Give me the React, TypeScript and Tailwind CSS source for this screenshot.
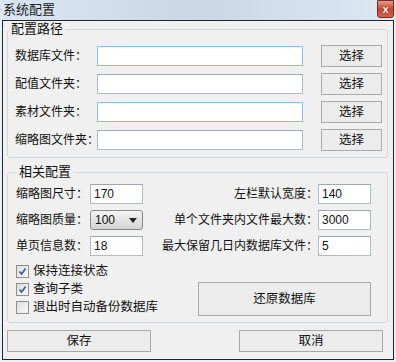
const ui = "font-['Liberation_Sans','Noto_Sans_CJK_SC',sans-serif]";

function TextBox({ value = "", width, blue = false }: { value?: string; width: string; blue?: boolean }) {
  return (
    <div
      className={`${width} h-[20px] shrink-0 border bg-white pl-[3px] text-[12px] leading-[18px] ${
        blue ? "border-[#8fbbe3]" : "border-[#b5b9c2] border-t-[#a2a6ae]"
      }`}
    >
      {value}
    </div>
  );
}

function Button({ label, className }: { label: string; className: string }) {
  return (
    <div
      className={`${className} flex shrink-0 items-center justify-center border border-[#a9a9a9] bg-[#ececec] text-[12.5px]`}
    >
      {label}
    </div>
  );
}

function Check({ checked, label }: { checked: boolean; label: string }) {
  return (
    <div className="flex h-[18px] items-center">
      <span className="flex h-[13px] w-[13px] items-center justify-center border border-[#8f8f8f] bg-gradient-to-br from-[#dcdcdc] to-[#fbfbfb]">
        {checked && (
          <svg width="9" height="9" viewBox="0 0 9 9">
            <path d="M1.5 4.5 L3.6 7 L7.6 1.5" fill="none" stroke="#4a5f97" strokeWidth="1.8" />
          </svg>
        )}
      </span>
      <span className="ml-[4px] whitespace-nowrap text-[12.5px]">{label}</span>
    </div>
  );
}

function Label({ text, className = "" }: { text: string; className?: string }) {
  return <span className={`${className} shrink-0 whitespace-nowrap text-[12px]`}>{text}</span>;
}

function PathRow({ label, blue }: { label: string; blue?: boolean }) {
  return (
    <div className="flex h-[28px] items-center pl-[7px]">
      <Label text={label} className="w-[82px]" />
      <TextBox width="w-[206px]" blue={blue} />
      <Button label="选择" className="ml-[18px] h-[22px] w-[61px]" />
    </div>
  );
}

function Legend({ text }: { text: string }) {
  return <legend className="ml-[1px] px-[2px] text-[13px] leading-[14px]">{text}</legend>;
}

export default function App() {
  return (
    <div className={`${ui} flex h-[362px] w-[396px] flex-col bg-[#e9f0f8] text-[#111]`}>
      <div className="flex h-[20px] items-start justify-between bg-gradient-to-r from-[#dae6f2] via-[#c9d7e6] to-[#dde8f4] pl-[3px] pr-[2px]">
        <span className="pt-[2px] text-[13px] leading-[16px] text-[#1a1a1a]">系统配置</span>
        <div className="flex h-[18px] w-[17px] items-center justify-center rounded-b-[3px] border border-[#7a2a20] bg-gradient-to-b from-[#e49a86] via-[#c9442c] to-[#d4624a]">
          <span className="text-[11px] font-bold leading-none text-white [text-shadow:0_0_1px_#3a0a00]">x</span>
        </div>
      </div>

      <div className="mx-[2px] flex h-[340px] flex-col border border-[#262626] bg-[#f0f0f0] pl-[4px] pr-[5px]">
        <fieldset className="mt-[1px] rounded-[3px] border border-[#d3d8dc] pb-[3px] pt-[6px]">
          <Legend text="配置路径" />
          <PathRow label="数据库文件：" blue />
          <PathRow label="配值文件夹：" />
          <PathRow label="素材文件夹：" blue />
          <PathRow label="缩略图文件夹：" />
        </fieldset>

        <fieldset className="mt-[7px] rounded-[3px] border border-[#d3d8dc] pb-[6px] pl-[8px] pr-[16px] pt-[2px]">
          <Legend text="相关配置" />
          <div className="flex h-[26px] items-center justify-between">
            <div className="flex items-center">
              <Label text="缩略图尺寸：" className="w-[74px]" />
              <TextBox width="w-[53px]" value="170" />
            </div>
            <div className="flex items-center">
              <Label text="左栏默认宽度：" />
              <TextBox width="w-[53px]" value="140" />
            </div>
          </div>
          <div className="flex h-[26px] items-center justify-between">
            <div className="flex items-center">
              <Label text="缩略图质量：" className="w-[74px]" />
              <div className="flex h-[20px] w-[53px] shrink-0 items-center justify-between rounded-[3px] border border-[#8a8a8a] bg-gradient-to-b from-[#f4f4f4] to-[#d4d4d4] pl-[4px] pr-[5px] text-[12px]">
                <span>100</span>
                <svg width="8" height="5" viewBox="0 0 8 5">
                  <path d="M0 0 H8 L4 5 Z" fill="#222" />
                </svg>
              </div>
            </div>
            <div className="flex items-center">
              <Label text="单个文件夹内文件最大数：" />
              <TextBox width="w-[53px]" value="3000" />
            </div>
          </div>
          <div className="flex h-[26px] items-center justify-between">
            <div className="flex items-center">
              <Label text="单页信息数：" className="w-[74px]" />
              <TextBox width="w-[53px]" value="18" />
            </div>
            <div className="flex items-center">
              <Label text="最大保留几日内数据库文件：" />
              <TextBox width="w-[53px]" value="5" />
            </div>
          </div>
          <div className="mt-[3px] flex items-end justify-between">
            <div className="flex flex-col">
              <Check checked label="保持连接状态" />
              <Check checked label="查询子类" />
              <Check checked={false} label="退出时自动备份数据库" />
            </div>
            <Button label="还原数据库" className="h-[34px] w-[173px]" />
          </div>
        </fieldset>

        <div className="mt-[7px] flex justify-between pr-[5px]">
          <Button label="保存" className="h-[22px] w-[144px]" />
          <Button label="取消" className="h-[22px] w-[144px]" />
        </div>
      </div>
    </div>
  );
}
